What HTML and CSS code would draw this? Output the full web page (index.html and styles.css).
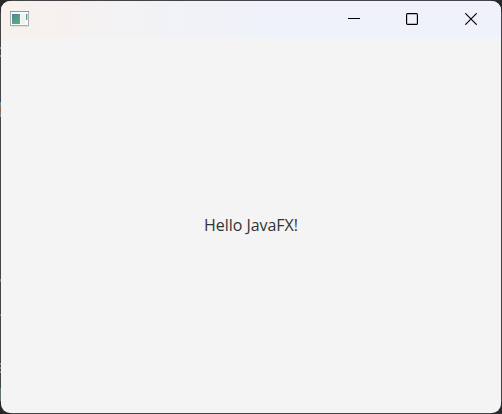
FILE: index.html
```html
<!DOCTYPE html>
<html lang="en">
<head>
<meta charset="utf-8">
<title>JavaFX</title>
<link rel="stylesheet" href="styles.css">
</head>
<body>
<div class="window">
  <header class="titlebar">
    <svg class="app-icon" width="19" height="16" viewBox="0 0 19 16">
      <defs>
        <linearGradient id="pane" x1="0" y1="0" x2="0.5" y2="1">
          <stop offset="0" stop-color="#527fa6"/>
          <stop offset="1" stop-color="#58b070"/>
        </linearGradient>
      </defs>
      <rect x="0.5" y="0.5" width="18" height="14" fill="#fafbfc" stroke="#a9acb2"/>
      <path d="M0 .5h19" stroke="#9095a0"/>
      <path d="M1 15.5h18" stroke="#e3dfdd"/>
      <rect x="2" y="3" width="8" height="10" fill="url(#pane)"/>
      <rect x="11" y="3" width="4" height="10" fill="#eff1f3"/>
      <rect x="16" y="3" width="1.3" height="6" fill="url(#pane)"/>
    </svg>
    <div class="controls">
      <svg class="control" width="12" height="12" viewBox="0 0 12 12"><path d="M0 5.5h12"/></svg>
      <svg class="control" width="12" height="12" viewBox="0 0 12 12"><rect x="0.6" y="0.6" width="10.8" height="10.8" rx="1"/></svg>
      <svg class="control close" width="12" height="12" viewBox="0 0 12 12"><path d="M.3.3l11.4 11.4M11.7.3L.3 11.7"/></svg>
    </div>
  </header>
  <main class="content"><span class="label">Hello JavaFX!</span></main>
</div>
</body>
</html>
```
FILE: styles.css
```css
* { box-sizing: border-box; }
body {
  margin: 0;
  height: 414px;
  padding: 1px;
  overflow: hidden;
  background:
    linear-gradient(#8b8b8d 0 0) 0 47px / 1px 2px no-repeat,
    linear-gradient(#8b8b8d 0 0) 0 55px / 1px 2px no-repeat,
    linear-gradient(#6f8fa8, #8a6248, #6f8fa8) 0 102px / 1px 15px no-repeat,
    linear-gradient(#77777c 0 0) 0 279px / 1px 3px no-repeat,
    linear-gradient(#77777c 0 0) 0 314px / 1px 2px no-repeat,
    linear-gradient(#858587 0 2px, #454347 0 4px, #858587 0 6px, #454347 0 8px, #858587 0) 0 363px / 1px 10px no-repeat,
    linear-gradient(#5d7674 0 0) 0 388px / 1px 13px no-repeat,
    linear-gradient(#454347 0 0) 50% 50% / 480px 100% no-repeat,
    linear-gradient(#454347 0 0) 50% 50% / 100% 390px no-repeat, #29282a;
}
.window {
  height: 412px;
  display: flex;
  flex-direction: column;
  border-radius: 9px;
  overflow: hidden;
  background: #f4f4f4;
}
.titlebar {
  height: 36px;
  flex: none;
  display: flex;
  align-items: flex-start;
  justify-content: space-between;
  padding: 10px 24px 0 9px;
  background: linear-gradient(90deg, #f8f1ed 0, #f6f1ef 60px, #f3f2f4 120px, #f1f2f7 190px, #eff2fa 260px, #eff2fb 100%);
}
.controls {
  display: flex;
  gap: 46px;
  padding-top: 2px;
}
.control {
  fill: none;
  stroke: #000;
  stroke-width: 1.15;
}
.close { margin-left: 1px; }
.content {
  flex: 1;
  display: flex;
  align-items: center;
  justify-content: center;
}
.label {
  font: 16px/22px "Open Sans", "Noto Sans", sans-serif;
  letter-spacing: -0.05px;
  color: #333;
}
```
